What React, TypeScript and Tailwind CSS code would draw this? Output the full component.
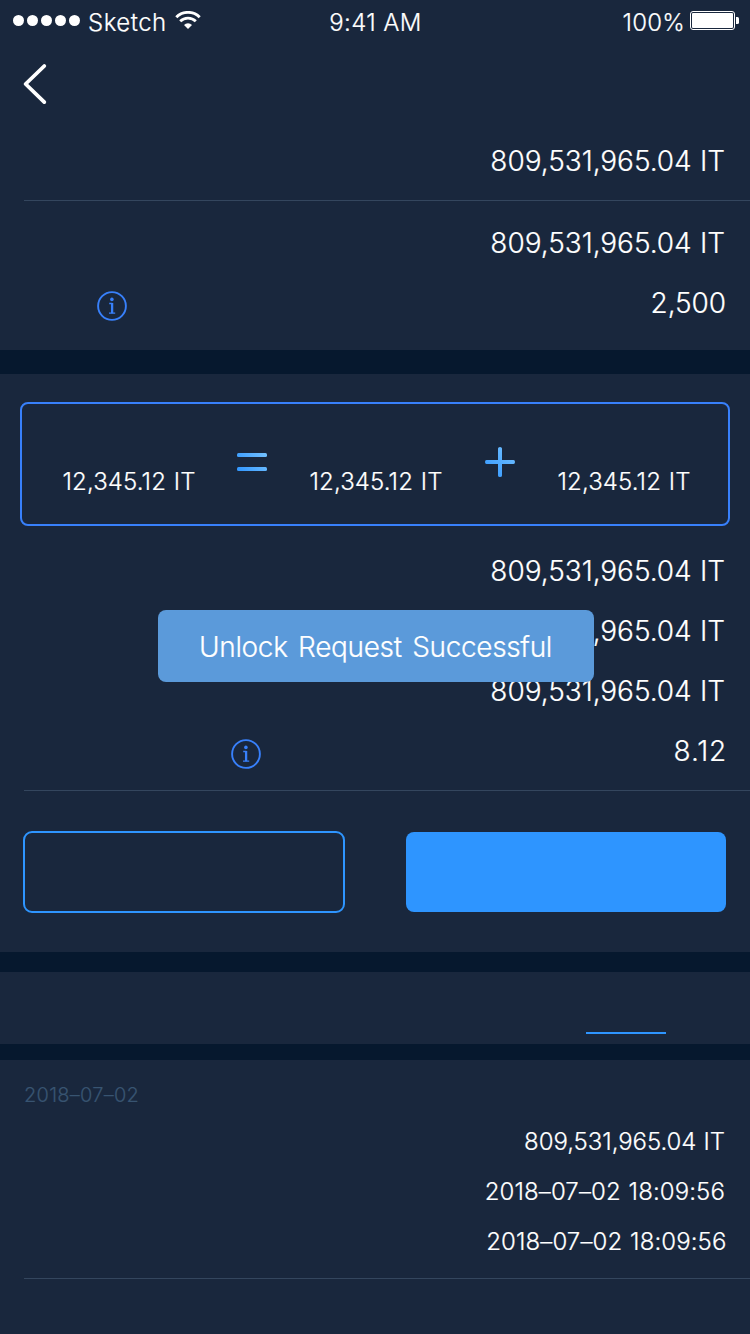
import type { ReactNode } from "react";

function InfoIcon() {
  return (
    <svg className="size-[30px]" viewBox="0 0 30 30" fill="none">
      <circle cx="15" cy="15" r="13.9" stroke="#3880fb" strokeWidth="1.9" />
      <circle cx="14.9" cy="8.4" r="1.8" fill="#3880fb" />
      <path d="M12.2 12.5h3.2M12 22.2h6.2" stroke="#3880fb" strokeWidth="1.3" />
      <path d="M15.1 12v10.2" stroke="#3880fb" strokeWidth="2.3" />
    </svg>
  );
}

function StatusBar() {
  return (
    <div className="flex h-10 items-start text-[24px] leading-[36px]">
      <div className="flex flex-1 items-start pl-[13px]">
        <svg className="mt-[15px] h-[11px] w-[67px]" viewBox="0 0 67 11" fill="#fff">
          <circle cx="5.5" cy="5.5" r="5.5" />
          <circle cx="19.5" cy="5.5" r="5.5" />
          <circle cx="33.5" cy="5.5" r="5.5" />
          <circle cx="47.5" cy="5.5" r="5.5" />
          <circle cx="61.5" cy="5.5" r="5.5" />
        </svg>
        <span className="mt-[5px] ml-[8px] w-[87px] tracking-[0.5px]">Sketch</span>
        <svg className="mt-[11px] h-[18px] w-[26px]" viewBox="0 0 26 18" fill="none" stroke="#fff">
          <path d="M1.3 6.2a16.6 16.6 0 0 1 23.4 0" strokeWidth="2.9" />
          <path d="M5.2 10.3a11 11 0 0 1 15.6 0" strokeWidth="2.8" />
          <path d="M13 18l-4-4.1a5.7 5.7 0 0 1 8 0z" fill="#fff" stroke="none" />
        </svg>
      </div>
      <span className="mt-[5px] -ml-px tracking-[0.4px]">9:41 AM</span>
      <div className="flex flex-1 items-start justify-end pr-[11px]">
        <span className="mt-[5px] mr-[5px] tracking-[0.2px]">100%</span>
        <svg className="mt-[11px] h-[19px] w-[49px]" viewBox="0 0 49 19" fill="none">
          <rect x="0.5" y="0.5" width="44" height="18" rx="2.5" stroke="#fff" />
          <rect x="2" y="2" width="41" height="15" rx="1" fill="#fff" />
          <path d="M46 6h1.5q1.5 0 1.5 1.5v4q0 1.5-1.5 1.5H46z" fill="#fff" />
        </svg>
      </div>
    </div>
  );
}

function Divider() {
  return <div className="ml-6 h-px shrink-0 bg-[#34465e]" />;
}

function Amount({ children }: { children: ReactNode }) {
  return (
    <p className="h-10 pr-[25px] text-right text-[28px] leading-[42px] tracking-[-0.05px] [word-spacing:0.5px]">
      {children}
    </p>
  );
}

function BoxAmount() {
  return <p className="pl-[0.5px] text-[24px] leading-[38px] tracking-[0.12px] [word-spacing:1px]">12,345.12 IT</p>;
}

export default function App() {
  return (
    <div className="relative flex h-[1334px] w-[750px] flex-col overflow-hidden bg-[#06182e] font-['Inter',sans-serif] font-light text-white [-webkit-text-stroke:0.2px_currentColor]">
      <section className="h-[350px] bg-[#19273d]">
        <StatusBar />
        <nav className="flex h-[88px] items-center pl-[22px]">
          <svg className="h-[44px] w-[26px]" viewBox="0 0 26 44" fill="none" stroke="#fff" strokeWidth="3.8" strokeLinecap="round" strokeLinejoin="round">
            <path d="M22.3 4L3.6 22l18.7 18.1" />
          </svg>
        </nav>
        <div className="pt-3 pb-5">
          <Amount>809,531,965.04 IT</Amount>
        </div>
        <Divider />
        <div className="flex flex-col gap-5 pt-[21px]">
          <Amount>809,531,965.04 IT</Amount>
          <div className="flex justify-between pr-6 pl-[97px]">
            <div className="mt-[9px]">
              <InfoIcon />
            </div>
            <p className="text-[28px] leading-[42px] tracking-[-0.1px]">2,500</p>
          </div>
        </div>
      </section>

      <section className="mt-6 h-[578px] bg-[#19273d] pt-7">
        <div className="mx-5 flex h-[124px] items-start rounded-lg border-2 border-[#3880fb] pl-[40px]">
          <div className="mt-[59px] w-[175px]">
            <BoxAmount />
          </div>
          <svg className="mt-[49px] h-[18px] w-[30px]" viewBox="0 0 30 18">
            <defs>
              <linearGradient id="equals" gradientUnits="userSpaceOnUse" x1="0" y1="18" x2="30" y2="0">
                <stop stopColor="#3096ff" />
                <stop offset="1" stopColor="#75c2ff" />
              </linearGradient>
            </defs>
            <rect width="30" height="4" rx="1.5" fill="url(#equals)" />
            <rect y="14" width="30" height="4" rx="1.5" fill="url(#equals)" />
          </svg>
          <div className="mt-[59px] ml-[42px] w-[176px]">
            <BoxAmount />
          </div>
          <svg className="mt-[43px] size-[30px]" viewBox="0 0 30 30">
            <defs>
              <linearGradient id="plus" gradientUnits="userSpaceOnUse" x1="0" y1="30" x2="30" y2="0">
                <stop stopColor="#3096ff" />
                <stop offset="1" stopColor="#75c2ff" />
              </linearGradient>
            </defs>
            <path d="M1.5 13H13V1.5Q13 0 15 0T17 1.5V13H28.5Q30 13 30 15T28.5 17H17V28.5Q17 30 15 30T13 28.5V17H1.5Q0 17 0 15T1.5 13z" fill="url(#plus)" />
          </svg>
          <div className="mt-[59px] ml-[42px]">
            <BoxAmount />
          </div>
        </div>
        <div className="flex flex-col gap-5 pt-6 pb-5">
          <Amount>809,531,965.04 IT</Amount>
          <Amount>809,531,965.04 IT</Amount>
          <Amount>809,531,965.04 IT</Amount>
          <div className="flex h-10 justify-between pr-[23px] pl-[231px]">
            <div className="mt-[9px]">
              <InfoIcon />
            </div>
            <p className="text-[28px] leading-[42px] tracking-[0.8px]">8.12</p>
          </div>
        </div>
        <Divider />
        <div className="flex items-center justify-between pt-10 pr-6 pl-[23px]">
          <button aria-label="Secondary" className="h-[82px] w-[322px] rounded-[9px] border-2 border-[#2e95ff]" />
          <button aria-label="Primary" className="h-20 w-80 rounded-lg bg-[#2e95ff]" />
        </div>
      </section>

      <section className="mt-5 flex h-[72px] items-end justify-end bg-[#19273d] pr-[84px] pb-[10px]">
        <div className="h-0.5 w-20 bg-[#2e95ff]" />
      </section>

      <section className="mt-4 flex-1 bg-[#19273d] pt-[23px]">
        <p className="pl-6 text-[20px] leading-[24px] tracking-[0.25px] text-[#385471]">2018–07–02</p>
        <div className="mt-[10px] mb-[11px] text-right text-[24px] leading-[50px]">
          <p className="pr-[25px] tracking-[-0.06px] [word-spacing:0.5px]">809,531,965.04 IT</p>
          <p className="pr-[25px] tracking-[0.1px] [word-spacing:1px]">2018–07–02 18:09:56</p>
          <p className="pr-[23.500px] tracking-[0.1px] [word-spacing:1px]">2018–07–02 18:09:56</p>
        </div>
        <Divider />
      </section>

      <div className="absolute top-[610px] left-[158px] flex h-[72px] w-[436px] items-center justify-center rounded-lg bg-[#5b9ada] pt-[2px] pr-px text-[28px] leading-[40px] tracking-[-0.35px] [word-spacing:3px]">
        Unlock Request Successful
      </div>
    </div>
  );
}
